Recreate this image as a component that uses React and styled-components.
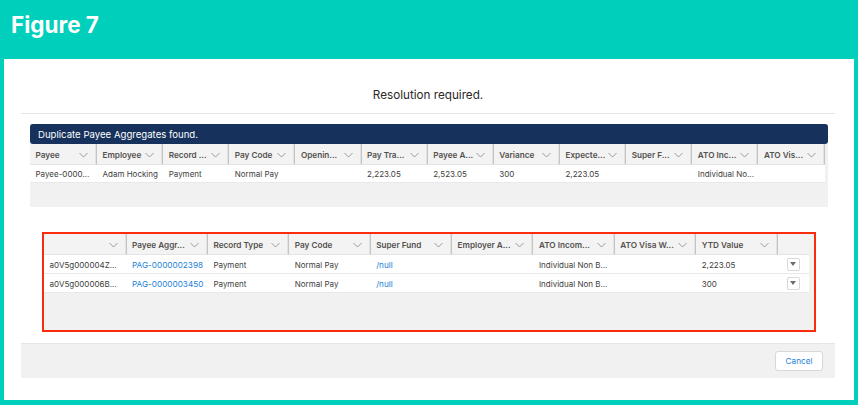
import React from "react";
import styled, { createGlobalStyle } from "styled-components";

const GlobalStyle = createGlobalStyle`
  html, body {
    margin: 0;
    padding: 0;
    background: #00cfbb;
  }
  body {
    font-family: "Inter", "Liberation Sans", sans-serif;
    -webkit-font-smoothing: antialiased;
  }
`;

const Page = styled.div`
  width: 858px;
  height: 405px;
  overflow: hidden;
`;

const Banner = styled.header`
  height: 59px;
  padding: 0 0 7px 11px;
  display: flex;
  align-items: center;
  box-sizing: border-box;
`;

const BannerTitle = styled.h1`
  margin: 0 0 3px;
  font-size: 22.5px;
  font-weight: 700;
  color: #ffffff;
`;

const Panel = styled.main`
  margin: 0 4px;
  height: 341px;
  padding: 0 19px 0 17px;
  background: #ffffff;
`;

const ModalHeader = styled.div`
  height: 55px;
  padding-top: 18px;
  box-sizing: border-box;
  display: flex;
  align-items: center;
  justify-content: center;
  border-bottom: 1px solid #e5e5e5;
  font-size: 11.7px;
  color: #2b2826;
`;

const Notice = styled.section`
  margin: 10px 7px 0 9px;
  background: #f1f1f1;
  height: 83px;
`;

const NoticeBar = styled.div`
  height: 20px;
  padding-left: 8px;
  display: flex;
  align-items: center;
  background: #16325c;
  border-radius: 3px;
  color: #ffffff;
  font-size: 9.6px;
`;

const Row = styled.div`
  display: grid;
  grid-template-columns: ${(props) => props.$columns};
`;

const HeadRow = styled(Row)`
  height: 21px;
`;

const BodyRow = styled(Row)`
  height: ${(props) => props.$height}px;
  width: ${(props) => props.$width}px;
  box-sizing: border-box;
  background: #ffffff;
  border-bottom: 1px solid #e9e9e9;
`;

const HeadCell = styled.div`
  display: flex;
  align-items: center;
  justify-content: ${(props) => (props.$empty ? "flex-end" : "space-between")};
  min-width: 0;
  padding: 1px 8px 0 5.5px;
  box-sizing: border-box;
  background: #f3f3f3;
  border-right: 1px solid #c4c4c4;
  box-shadow: inset -1px 0 0 #e2e2e2;
  border-bottom: 1px solid #e4e4e4;
  font-size: 8.2px;
  font-weight: 600;
  color: #54514f;
  white-space: nowrap;
`;

const BlankHead = styled.div`
  background: #f3f3f3;
  border-bottom: 1px solid #e4e4e4;
`;

const Cell = styled.div`
  display: flex;
  align-items: center;
  min-width: 0;
  padding: 1px 0 0 5.5px;
  font-size: 8px;
  color: #3e3e3c;
  white-space: nowrap;
`;

const LinkCell = styled(Cell)`
  font-size: 8.2px;
  color: #1b7fd6;
`;

const ActionCell = styled(Cell)`
  padding: 0 9px 0 0;
  justify-content: flex-end;
`;

const Chevron = styled.svg`
  width: 9px;
  height: 6px;
  flex: none;
  fill: none;
  stroke: #858381;
  stroke-width: 0.8;
`;

const MenuButton = styled.button`
  width: 13px;
  height: 13px;
  padding: 0;
  display: flex;
  align-items: center;
  justify-content: center;
  background: #ffffff;
  border: 1px solid #d8d8d8;
  border-radius: 2px;
`;

const Caret = styled.svg`
  width: 6px;
  height: 4px;
  fill: #6f6d6b;
`;

const Highlight = styled.section`
  margin: 25px 19px 0 21px;
  height: 100px;
  box-sizing: border-box;
  border: 2px solid #fb2c0e;
  background: #f1f1f1;
`;

const Footer = styled.footer`
  margin-top: 11px;
  height: 35px;
  padding-right: 12px;
  display: flex;
  align-items: center;
  justify-content: flex-end;
  box-sizing: border-box;
  background: #f1f1f1;
  border-top: 1px solid #e5e5e5;
`;

const CancelButton = styled.button`
  width: 48px;
  height: 20px;
  padding: 0;
  background: #ffffff;
  border: 1px solid #d8d8d8;
  border-radius: 3px;
  color: #1b7fd6;
  font-family: inherit;
  font-size: 8.2px;
`;

const topColumns = "67px repeat(11, 66.15px)";
const bottomColumns = "82.5px repeat(8, 81.4px) 31.3px";

const topHeaders = [
  "Payee", "Employee", "Record ...", "Pay Code", "Openin...", "Pay Tra...",
  "Payee A...", "Variance", "Expecte...", "Super F...", "ATO Inc...", "ATO Vis...",
];

const topRow = [
  "Payee-0000...", "Adam Hocking", "Payment", "Normal Pay", "", "2,223.05",
  "2,523.05", "300", "2,223.05", "", "Individual No...", "",
];

const bottomHeaders = [
  "", "Payee Aggr...", "Record Type", "Pay Code", "Super Fund",
  "Employer A...", "ATO Incom...", "ATO Visa W...", "YTD Value",
];

const bottomRows = [
  { id: "a0V5g000004Z...", link: "PAG-0000002398", ytd: "2,223.05" },
  { id: "a0V5g000006B...", link: "PAG-0000003450", ytd: "300" },
];

const Header = ({ label }) => (
  <HeadCell $empty={!label}>
    {label && <span>{label}</span>}
    <Chevron viewBox="0 0 9 6">
      <path d="M0.5 1 L4.5 5 L8.5 1" />
    </Chevron>
  </HeadCell>
);

export default function App() {
  return (
    <Page>
      <GlobalStyle />
      <Banner>
        <BannerTitle>Figure 7</BannerTitle>
      </Banner>
      <Panel>
        <ModalHeader>Resolution required.</ModalHeader>

        <Notice>
          <NoticeBar>Duplicate Payee Aggregates found.</NoticeBar>
          <HeadRow $columns={topColumns}>
            {topHeaders.map((label) => (
              <Header key={label} label={label} />
            ))}
          </HeadRow>
          <BodyRow $columns={topColumns} $height={18} $width={795}>
            {topRow.map((value, index) => (
              <Cell key={index}>{value}</Cell>
            ))}
          </BodyRow>
        </Notice>

        <Highlight>
          <HeadRow $columns={bottomColumns}>
            {bottomHeaders.map((label) => (
              <Header key={label || "id"} label={label} />
            ))}
            <BlankHead />
          </HeadRow>
          {bottomRows.map((row) => (
            <BodyRow key={row.link} $columns={bottomColumns} $height={19} $width={765}>
              <Cell>{row.id}</Cell>
              <LinkCell>{row.link}</LinkCell>
              <Cell>Payment</Cell>
              <Cell>Normal Pay</Cell>
              <LinkCell>/null</LinkCell>
              <Cell />
              <Cell>Individual Non B...</Cell>
              <Cell />
              <Cell>{row.ytd}</Cell>
              <ActionCell>
                <MenuButton aria-label="Show actions">
                  <Caret viewBox="0 0 6 4">
                    <path d="M0 0 H6 L3 4 Z" />
                  </Caret>
                </MenuButton>
              </ActionCell>
            </BodyRow>
          ))}
        </Highlight>

        <Footer>
          <CancelButton>Cancel</CancelButton>
        </Footer>
      </Panel>
    </Page>
  );
}
